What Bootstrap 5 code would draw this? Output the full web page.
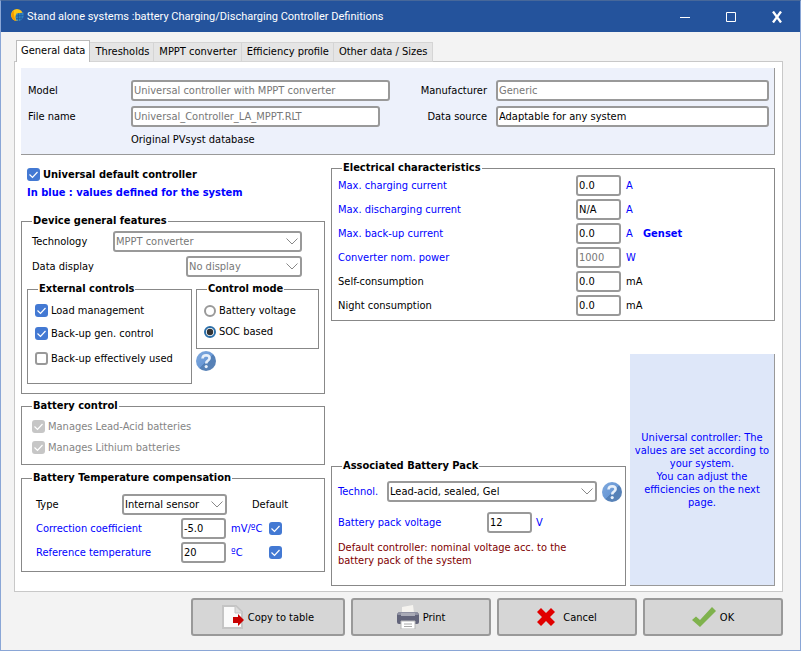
<!DOCTYPE html>
<html lang="en">
<head>
<meta charset="utf-8">
<meta name="viewport" content="width=device-width, initial-scale=1">
<title>Controller Definitions</title>
<link href="https://cdn.jsdelivr.net/npm/bootstrap@5.3.0/dist/css/bootstrap.min.css" rel="stylesheet">
<style>
body{font-family:"DejaVu Sans Condensed","DejaVu Sans",sans-serif;font-size:11px;line-height:13px;color:#000;background:#f3f3f3}
.window{border:1px solid #8aa6d6;border-top-color:#47689a}
.titlebar{background:#24539c;color:#fff;height:31px;padding-left:9px}
.app-title{font-family:Roboto,sans-serif;font-size:11px;font-weight:400;line-height:16px;padding-top:1px}
.app-mark{flex:none;margin-right:3px}
.win-btn{width:46px;height:31px;background:none;border:0;padding:0;color:#fff}
.body-area{padding:8px 17px 14px 13px}
.tabs{margin-left:2px;margin-bottom:-1px;position:relative;border:0}
.tabs .nav-link{font-size:11px;line-height:13px;color:#000;background:#e5e5e5;border:1px solid #d5d5d5;border-left-width:0;border-radius:0;padding:2px 4px 3px 5px;margin:0}
.tabs .nav-link.active{background:#fff;border:1px solid #bbb;border-bottom:0;padding:3px 4px 5px;color:#000}
.sheet{background:#fff;border:1px solid #c8c8c8;padding:6px 7px 5px 6px}
.head-box{background:#edf1fb;border-right:1px solid #999;border-bottom:1px solid #999;padding:12px 5px 8px 7px}
.head-grid{display:grid;grid-template-columns:103px 259fr 106px 273fr;row-gap:5px;align-items:center}
.head-grid .to-right{text-align:right;padding-right:9px}
.origin{padding-top:1px}
.fld,.pick{display:block;height:21px;border:2px solid #999;border-radius:3px;background-color:#fff;color:#000;font-size:11px;line-height:13px;padding:0 1px;min-width:0}
.fld:disabled,.pick:disabled{color:#777;background-color:#fff;opacity:1}
.pick{appearance:none;padding:0 18px 0 1px;background-image:url("data:image/svg+xml,%3Csvg xmlns='http://www.w3.org/2000/svg' width='12' height='7' viewBox='0 0 12 7'%3E%3Cpath d='M.5.5 6 6 11.5.5' fill='none' stroke='%23888'/%3E%3C/svg%3E");background-repeat:no-repeat;background-position:right 2px center}
.w-num{width:45px}
.w-file{width:96%}
.group{--side:6px;border:1px solid #888;min-width:0}
.group>legend{float:none;width:auto;font-size:11px;line-height:14px;font-weight:700;margin:0 0 0 calc(10px - var(--side));padding:0 1px}
.columns{gap:6px}
.left-col{width:304px;padding-top:9px}
.right-col{padding-top:6px;min-width:0}
.def-row{height:20px;padding-left:6px}
.def-note{padding-left:6px;margin-top:2px}
.blue{color:#00f}
.maroon{color:#800000}
.tick{flex:none;width:13px;height:13px;margin:0;border:2px solid #999;border-radius:3px!important}
.tick:checked{border:0;background-color:#4379d3;background-size:13px 13px;background-image:url("data:image/svg+xml,%3Csvg xmlns='http://www.w3.org/2000/svg' viewBox='0 0 13 13'%3E%3Cpath d='M2.5 6.5 5.5 9.5 10.5 4' fill='none' stroke='%23fff' stroke-width='1.2'/%3E%3C/svg%3E")}
.tick:disabled{background-color:#c6c6c6;opacity:1}
.dot{flex:none;width:12px;height:12px;margin:0;border:2px solid #999}
.dot:checked{border-color:#2b6ea8;background-color:#fff;background-size:8px 8px;background-image:url("data:image/svg+xml,%3Csvg xmlns='http://www.w3.org/2000/svg' viewBox='0 0 8 8'%3E%3Ccircle cx='4' cy='4' r='3.2' fill='%23333'/%3E%3C/svg%3E")}
.opt{display:flex;align-items:center;gap:3px;min-height:13px}
.opt .form-check-input:disabled~label{opacity:1}
.muted-opt{color:#858585}
.help-btn{flex:none;width:20px;height:20px;border:0;padding:0;background:none}
.help-btn svg,.cmd svg,.win-btn svg{display:block}
.device{--side:5px;margin-top:15px;padding:3px 5px 9px 5px}
.form-line{padding-left:5px;padding-right:17px;height:21px}
.form-line+.form-line{margin-top:4px}
.pick-tech{width:189px}.pick-data{width:116px}
.device-subs{margin-top:5px;gap:4px}
.ext{--side:7px;width:165px;padding:8px 7px 18px}
.ext .opt+.opt{margin-top:10px}
.ext .opt:last-child{margin-top:12px}
.mode{--side:7px;width:123px;padding:8px 7px 10px}
.mode .opt+.opt{margin-top:8px}
.mode-side{display:flex;flex-direction:column;gap:2px}
.bat{--side:10px;margin-top:5px;padding:7px 10px 10px}
.bat .opt+.opt{margin-top:8px}
.temp{--side:14px;margin-top:6px;padding:9px 14px 8px}
.temp-line{display:grid;align-items:center;grid-template-columns:145px 45px 38px 1fr;height:21px}
.temp-line+.temp-line{margin-top:3px}
.temp-line.type-line{grid-template-columns:86px 105px 1fr}
.temp-line .after{padding-left:5px}
.type-line .after{padding-left:25px}
.temp-line .tick{margin-left:5px}
.elec{padding:0 6px 4px}
.elec-line{display:grid;grid-template-columns:238px 45px 22px 1fr;align-items:center;height:21px}
.elec-line+.elec-line{margin-top:3px}
.elec-line .unit{padding-left:5px}
.lower{display:grid;grid-template-columns:295fr 145fr;gap:4px;align-items:end;margin-top:33px}
.pack{padding:8px 3px 18px 6px}
.pack .pack-volt{margin-top:10px}
.pack-tech label{width:49px}
.pack-tech .help-btn{margin-left:5px}
.pack-volt label{width:149px}
.pack-note{margin-top:8px}
.info{min-height:232px;background:#dee7f9;border-right:1px solid #999;border-bottom:1px solid #999;padding:0 3px}
.cmds{display:grid;grid-template-columns:154fr 140fr 140fr 140fr;gap:6px;margin:6px 0 0 177px}
.cmd{height:38px;border:2px solid #999;border-radius:3px;background:#d6d6d6;color:#000;font-size:11px;line-height:13px;padding:0}
.cmd:hover{background:#ddd;color:#000}
</style>
</head>
<body>
<svg width="0" height="0" class="position-absolute" aria-hidden="true">
  <defs>
    <linearGradient id="helpBlue" x1="0" y1="0" x2="1" y2="1"><stop offset="0" stop-color="#80a9dd"/><stop offset=".5" stop-color="#6a99d6"/><stop offset=".51" stop-color="#5380b8"/><stop offset="1" stop-color="#5b83b5"/></linearGradient>
  </defs>
</svg>
<div class="window min-vh-100 d-flex flex-column">
  <header class="titlebar d-flex align-items-center">
    <svg width="14" height="18" viewBox="0 0 14 18" class="app-mark" aria-hidden="true"><circle cx="7" cy="7" r="6" fill="#ffc814"/><path d="M2 10Q0 5 4 2.500Q3 7 6 12.900Q3 12.500 2 10Z" fill="#f29a00"/><path d="M6.500 5.500 13.500 4.500V9Q12.500 12 9 13L6 12.500Q4.500 9 6.500 5.500Z" fill="#2f83c5"/><path d="M5.800 8 13.500 7.500M6 10.500 12.500 10.200M8.500 5.300V13M11 5V12.300" stroke="#1d5796" stroke-width=".7"/></svg>
    <h1 class="app-title m-0 flex-grow-1">Stand alone systems :battery Charging/Discharging Controller Definitions</h1>
    <button type="button" class="win-btn d-flex align-items-center justify-content-center" aria-label="Minimize"><svg width="10" height="10" viewBox="0 0 10 10"><path d="M0 5.500H10" stroke="#fff"/></svg></button>
    <button type="button" class="win-btn d-flex align-items-center justify-content-center" aria-label="Maximize"><svg width="10" height="10" viewBox="0 0 10 10"><path d="M.5.500H9.500V9.500H.5Z" stroke="#fff" fill="none"/></svg></button>
    <button type="button" class="win-btn d-flex align-items-center justify-content-center" aria-label="Close"><svg width="12" height="12" viewBox="0 0 12 12"><path d="M2 .5 10 11.500M10 .5 2 11.500" stroke="#fff" stroke-width="2.300"/></svg></button>
  </header>

  <main class="body-area flex-grow-1 d-flex flex-column">
    <ul class="nav nav-tabs tabs align-items-end">
      <li class="nav-item"><a class="nav-link active" href="#general">General data</a></li>
      <li class="nav-item"><a class="nav-link" href="#thresholds">Thresholds</a></li>
      <li class="nav-item"><a class="nav-link" href="#mppt">MPPT converter</a></li>
      <li class="nav-item"><a class="nav-link" href="#efficiency">Efficiency profile</a></li>
      <li class="nav-item"><a class="nav-link" href="#other">Other data / Sizes</a></li>
    </ul>

    <section class="sheet" id="general">
      <div class="head-box">
        <div class="head-grid">
          <label for="model">Model</label>
          <input id="model" class="fld w-100" value="Universal controller with MPPT converter" disabled>
          <label for="maker" class="to-right">Manufacturer</label>
          <input id="maker" class="fld w-100" value="Generic" disabled>
          <label for="file">File name</label>
          <input id="file" class="fld w-file" value="Universal_Controller_LA_MPPT.RLT" disabled>
          <label for="source" class="to-right">Data source</label>
          <input id="source" class="fld w-100" value="Adaptable for any system">
          <span></span><span class="origin">Original PVsyst database</span>
        </div>
      </div>

      <div class="d-flex columns">
        <div class="left-col flex-shrink-0">
          <div class="opt def-row fw-bold"><input type="checkbox" id="univ" class="form-check-input tick" checked><label for="univ">Universal default controller</label></div>
          <div class="blue fw-bold def-note">In blue : values defined for the system</div>

          <fieldset class="group device">
            <legend>Device general features</legend>
            <div class="form-line d-flex justify-content-between align-items-center"><label for="tech">Technology</label><select id="tech" class="pick pick-tech" disabled><option>MPPT converter</option></select></div>
            <div class="form-line d-flex justify-content-between align-items-center"><label for="disp">Data display</label><select id="disp" class="pick pick-data" disabled><option>No display</option></select></div>
            <div class="device-subs d-flex">
              <fieldset class="group ext">
                <legend>External controls</legend>
                <div class="opt"><input type="checkbox" id="load" class="form-check-input tick" checked><label for="load">Load management</label></div>
                <div class="opt"><input type="checkbox" id="gen" class="form-check-input tick" checked><label for="gen">Back-up gen. control</label></div>
                <div class="opt"><input type="checkbox" id="used" class="form-check-input tick"><label for="used">Back-up effectively used</label></div>
              </fieldset>
              <div class="mode-side">
                <fieldset class="group mode">
                  <legend>Control mode</legend>
                  <div class="opt"><input type="radio" name="mode" id="volt" class="form-check-input dot"><label for="volt">Battery voltage</label></div>
                  <div class="opt"><input type="radio" name="mode" id="soc" class="form-check-input dot" checked><label for="soc">SOC based</label></div>
                </fieldset>
                <button type="button" class="help-btn" aria-label="Help on control mode"><svg width="20" height="20" viewBox="0 0 20 20"><circle cx="10" cy="10" r="10" fill="url(#helpBlue)"/><path d="M6.500 7.500Q6.800 4.300 10.200 4.300Q13.700 4.500 13.600 7.200Q13.500 8.800 11.700 9.800Q10.200 10.700 10.200 12.500" fill="none" stroke="#e8f0fa" stroke-width="2.600"/><circle cx="10.200" cy="15.600" r="1.600" fill="#e8f0fa"/></svg></button>
              </div>
            </div>
          </fieldset>

          <fieldset class="group bat">
            <legend>Battery control</legend>
            <div class="opt muted-opt"><input type="checkbox" id="lead" class="form-check-input tick" checked disabled><label for="lead">Manages Lead-Acid batteries</label></div>
            <div class="opt muted-opt"><input type="checkbox" id="lith" class="form-check-input tick" checked disabled><label for="lith">Manages Lithium batteries</label></div>
          </fieldset>

          <fieldset class="group temp">
            <legend>Battery Temperature compensation</legend>
            <div class="temp-line type-line"><label for="type">Type</label><select id="type" class="pick w-100"><option>Internal sensor</option></select><span class="after">Default</span></div>
            <div class="temp-line"><label for="coef" class="blue">Correction coefficient</label><input id="coef" class="fld w-num" value="-5.0"><span class="blue after">mV/ºC</span><input type="checkbox" class="form-check-input tick" aria-label="Default correction coefficient" checked></div>
            <div class="temp-line"><label for="reft" class="blue">Reference temperature</label><input id="reft" class="fld w-num" value="20"><span class="blue after">ºC</span><input type="checkbox" class="form-check-input tick" aria-label="Default reference temperature" checked></div>
          </fieldset>
        </div>

        <div class="right-col flex-grow-1">
          <fieldset class="group elec">
            <legend>Electrical characteristics</legend>
            <div class="elec-line blue"><label for="e1">Max. charging current</label><input id="e1" class="fld w-num" value="0.0"><span class="unit">A</span></div>
            <div class="elec-line blue"><label for="e2">Max. discharging current</label><input id="e2" class="fld w-num" value="N/A"><span class="unit">A</span></div>
            <div class="elec-line blue"><label for="e3">Max. back-up current</label><input id="e3" class="fld w-num" value="0.0"><span class="unit">A</span><strong>Genset</strong></div>
            <div class="elec-line blue"><label for="e4">Converter nom. power</label><input id="e4" class="fld w-num" value="1000" disabled><span class="unit">W</span></div>
            <div class="elec-line"><label for="e5">Self-consumption</label><input id="e5" class="fld w-num" value="0.0"><span class="unit">mA</span></div>
            <div class="elec-line"><label for="e6">Night consumption</label><input id="e6" class="fld w-num" value="0.0"><span class="unit">mA</span></div>
          </fieldset>

          <div class="lower">
            <fieldset class="group pack">
              <legend>Associated Battery Pack</legend>
              <div class="pack-tech d-flex align-items-center"><label for="pt" class="blue">Technol.</label><select id="pt" class="pick flex-grow-1"><option>Lead-acid, sealed, Gel</option></select>
                <button type="button" class="help-btn" aria-label="Help on battery technology"><svg width="20" height="20" viewBox="0 0 20 20"><circle cx="10" cy="10" r="10" fill="url(#helpBlue)"/><path d="M6.500 7.500Q6.800 4.300 10.200 4.300Q13.700 4.500 13.600 7.200Q13.500 8.800 11.700 9.800Q10.200 10.700 10.200 12.500" fill="none" stroke="#e8f0fa" stroke-width="2.600"/><circle cx="10.200" cy="15.600" r="1.600" fill="#e8f0fa"/></svg></button></div>
              <div class="pack-volt d-flex align-items-center blue"><label for="pv">Battery pack voltage</label><input id="pv" class="fld w-num" value="12"><span class="ps-1">V</span></div>
              <p class="pack-note maroon mb-0">Default controller: nominal voltage acc. to the<br>battery pack of the system</p>
            </fieldset>
            <aside class="info blue text-center d-flex align-items-center justify-content-center"><p class="m-0">Universal controller: The values are set according to your system.<br>You can adjust the efficiencies on the next page.</p></aside>
          </div>
        </div>
      </div>
    </section>

    <div class="cmds">
      <button type="button" class="btn cmd d-flex align-items-center justify-content-center gap-1"><svg width="22" height="24" viewBox="0 0 22 24"><path d="M1 1H14L20 7V23H1Z" fill="#fafafa" stroke="#c4c4c4" stroke-width="2"/><path d="M13 1V8H20" fill="#ddd" stroke="#c4c4c4"/><path d="M11 12H16V9L22 15 16 21V18H11Z" fill="#c80000"/></svg>Copy to table</button>
      <button type="button" class="btn cmd d-flex align-items-center justify-content-center gap-1"><svg width="22" height="24" viewBox="0 0 22 24"><path d="M5 8V2L16 0 17 8Z" fill="#f5f3ef"/><path d="M2 7H20L22 9V17Q22 19 20 19H2Q0 19 0 17V9Z" fill="#62647a"/><path d="M2 7H20L22 10H0Z" fill="#8f91a2"/><path d="M4 8H18V11H4Z" fill="#a9aab6"/><path d="M4 16H18V24H4Z" fill="#fff" stroke="#b8b8b8"/><path d="M7 19H15M7 21.500H15" stroke="#aaa"/></svg>Print</button>
      <button type="button" class="btn cmd d-flex align-items-center justify-content-center gap-2"><svg width="18" height="18" viewBox="0 0 18 18"><path d="M4 0 9 5 14 0 18 4 13 9 18 14 14 18 9 13 4 18 0 14 5 9 0 4Z" fill="#e10000"/></svg>Cancel</button>
      <button type="button" class="btn cmd d-flex align-items-center justify-content-center gap-1"><svg width="24" height="20" viewBox="0 0 24 20"><path d="M0 13 4 9.500 8 13 20 0 24 4 8 20Z" fill="#7fb24d"/></svg>OK</button>
    </div>
  </main>
</div>
<script src="https://cdn.jsdelivr.net/npm/bootstrap@5.3.0/dist/js/bootstrap.bundle.min.js"></script>
</body>
</html>
